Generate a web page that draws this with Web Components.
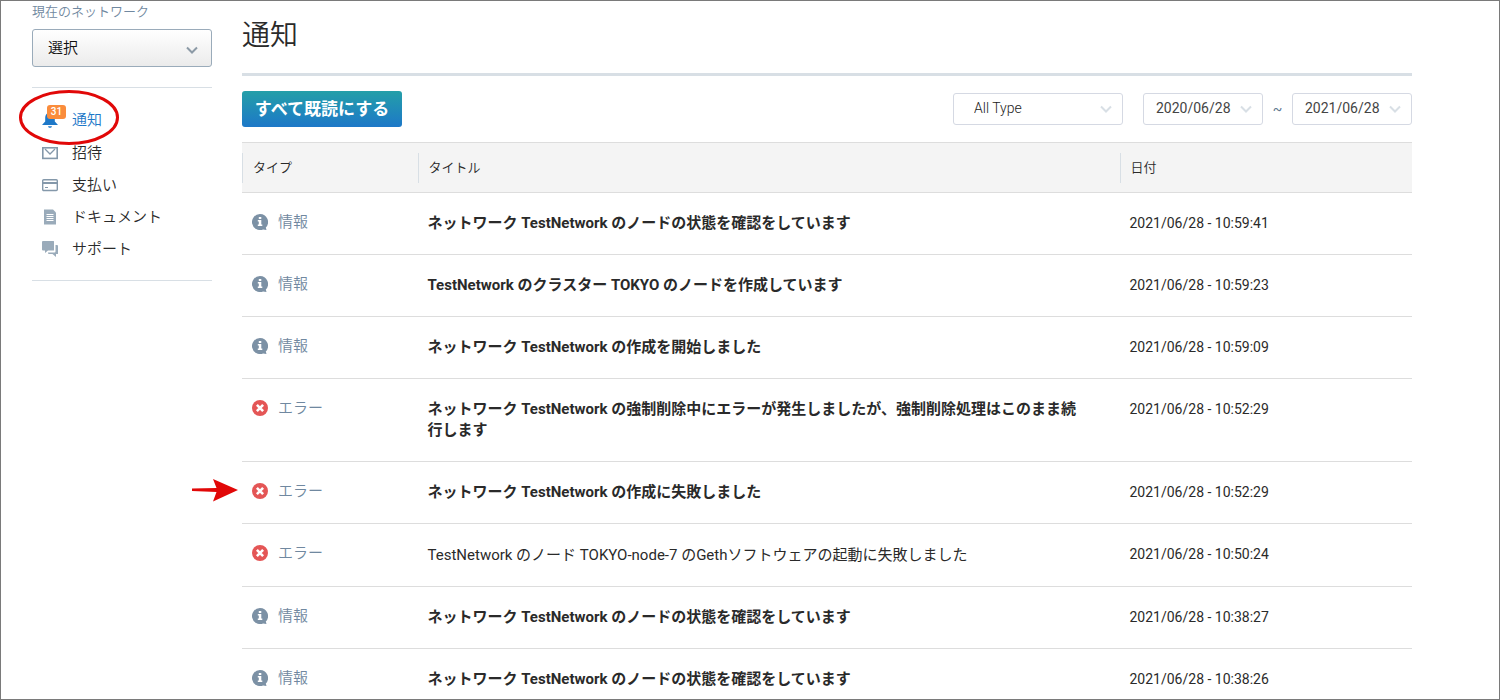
<!DOCTYPE html>
<html lang="ja">
<head>
<meta charset="utf-8">
<title>通知</title>
<style>
  * { box-sizing: border-box; }
  body {
    margin: 0;
    height: 100vh;
    overflow: hidden;
    border: 1px solid #7a7a7a;
    background: #fff;
    color: #2a2a2a;
    font: 350 15px/22px Roboto, "Noto Sans CJK JP", sans-serif;
  }
</style>
</head>
<body>
<app-shell>
  <side-bar slot="side">
    <nav-item icon="bell" badge="31" active marked>通知</nav-item>
    <nav-item icon="mail">招待</nav-item>
    <nav-item icon="card">支払い</nav-item>
    <nav-item icon="doc">ドキュメント</nav-item>
    <nav-item icon="chat">サポート</nav-item>
  </side-bar>
  <page-header>通知</page-header>
  <filter-bar></filter-bar>
  <notice-table></notice-table>
</app-shell>

<script>
const define = (name, css, html, init) => {
  const template = document.createElement('template');
  template.innerHTML = `<style>*{box-sizing:border-box}${css}</style>${html}`;
  customElements.define(name, class extends HTMLElement {
    connectedCallback() {
      if (this.shadowRoot) return;
      this.attachShadow({ mode: 'open' }).append(template.content.cloneNode(true));
      if (init) init(this, this.shadowRoot);
    }
  });
};

const icons = {
  bell: '<path fill="#1d78c8" d="M8 .5C4.700 .5 3.200 3 3.200 6v3.500L0 13h16l-3.200-3.500V6c0-3-1.500-5.500-4.800-5.500zM6 14.200h4c-.3 1.100-1 1.600-2 1.600s-1.700-.5-2-1.600z"/>',
  mail: '<rect x=".8" y="2.800" width="14.400" height="10.600" fill="none" stroke="#8498aa" stroke-width="1.600"/><path d="M3 4l5 5 5-5" fill="none" stroke="#8498aa" stroke-width="1.300"/>',
  card: '<rect x=".7" y="2.700" width="14.600" height="10.800" rx="1" fill="none" stroke="#8498aa" stroke-width="1.400"/><path d="M1 6h14" stroke="#8498aa" stroke-width="2"/><path d="M3 10.500h3" stroke="#8498aa"/>',
  doc: '<path fill="#9aabba" d="M2 .5h9l3 3v12H2z"/><path d="M4.500 5.500h7M4.500 7.500h7M4.500 9.500h7M4.500 11.500h7" stroke="#fff" stroke-width="1"/>',
  chat: '<path fill="#9aabba" d="M1 0h10.500q.5 0 .5.500v8.500q0 .5-.5.500H6l-3 2.500V9.500H1q-1 0-1-1V1q0-1 1-1z"/><path fill="#9aabba" d="M13.500 4H15q1 0 1 1v7.500q0 .5-.5.500H14v3l-3.500-3H7q-1 0-1-1v-.500h6.500q1 0 1-1z"/>',
  info: '<path fill="#7c91a5" d="M8 0a8 8 0 1 0 3 15.400L14.500 16l-.7-2.500A8 8 0 0 0 8 0z"/><path fill="#fff" d="M6.800 3h2.500v2H6.800zM5.800 6h3.500v4.500h1V12H5.800v-1.500h1V7.500h-1z"/>',
  error: '<circle cx="8" cy="8" r="8" fill="#e45656"/><path d="M4.900 4.900l6.200 6.200M11.100 4.900l-6.200 6.200" stroke="#fff" stroke-width="2.600"/>',
  chevron: '<path d="M3 5.500l5 5 5-5" fill="none" stroke="currentColor" stroke-width="2"/>'
};

define('ui-icon', ':host{display:block;width:16px;height:16px;flex:none}svg{display:block;width:100%;height:100%}', '<svg viewBox="0 0 16 16" aria-hidden="true"></svg>',
  (el, root) => { root.querySelector('svg').innerHTML = icons[el.getAttribute('name')]; });

define('app-shell', `
  :host{display:grid;grid-template-columns:180px minmax(0,1fr);column-gap:30px;max-width:1500px;margin:0 auto;padding:0 87px 0 31px}
`, '<aside><slot name="side"></slot></aside><main><slot></slot></main>');

define('side-bar', `
  :host{display:block}
  label{display:block;font-size:13px;line-height:20px;padding-top:1px;color:#7088a0}
  .pick{display:grid;align-items:center;margin:7px 0 20px}
  select{grid-area:1/1;appearance:none;width:100%;height:38px;padding:0 15px;border:1px solid #9aabba;border-radius:3px;
    background:linear-gradient(#fff,#ebebeb);color:#111;font:inherit}
  ui-icon{grid-area:1/1;justify-self:end;margin:3px 12px 0 0;color:#8c9aa6;pointer-events:none}
  nav{border:solid #d8dfe5;border-width:1px 0;padding:16px 0}
`, `<label for="network">現在のネットワーク</label>
  <div class="pick"><select id="network"><option>選択</option></select><ui-icon name="chevron"></ui-icon></div>
  <nav><slot></slot></nav>`);

define('nav-item', `
  :host{display:block;position:relative}
  a{display:flex;align-items:center;gap:14px;height:32px;padding:1px 0 0 10px;color:#2a2a2a;text-decoration:none}
  :host([active]) a{padding-top:0;color:#1d78c8}
  .badge{position:absolute;left:15px;top:1px;min-width:19px;height:14px;border-radius:3px;background:#fa8c3c;color:#fff;
    font-size:10px;font-weight:500;line-height:14px;text-align:center}
  .ring{position:absolute;left:-14px;top:-15px;width:102px;height:56px;pointer-events:none}
`, '<a href="#"><ui-icon></ui-icon><span><slot></slot></span></a>',
  (el, root) => {
    root.querySelector('ui-icon').replaceWith(Object.assign(document.createElement('template'), {
      innerHTML: `<ui-icon name="${el.getAttribute('icon')}"></ui-icon>` }).content);
    if (el.hasAttribute('badge')) root.querySelector('a').insertAdjacentHTML('beforeend', `<span class="badge">${el.getAttribute('badge')}</span>`);
    if (el.hasAttribute('marked')) root.querySelector('a').insertAdjacentHTML('afterend',
      '<svg class="ring" viewBox="0 0 102 56"><ellipse cx="51" cy="28.500" rx="48.500" ry="26" fill="none" stroke="#e10808" stroke-width="3"/></svg>');
  });

define('page-header', `
  :host{display:block;border-bottom:3px solid #d8dfe5}
  h1{margin:0;padding:15px 0 17px;font-size:28px;line-height:40px;font-weight:350}
`, '<h1><slot></slot></h1>');

define('filter-bar', `
  :host{display:flex;align-items:center;justify-content:space-between;padding:15px 0}
  button{width:160px;height:36px;padding:0;border:0;border-radius:3px;background:linear-gradient(#249fa8,#1d78c8);
    color:#fff;font:700 17px/34px Roboto,"Noto Sans CJK JP",sans-serif}
  .filters{display:flex;align-items:center;color:#5f7890}
  .tilde{width:29px;text-align:center;font-size:14px;font-weight:400}
  .box{display:grid;align-items:center;width:120px}
  .type{width:170px;margin-right:20px}
  select,input{grid-area:1/1;appearance:none;width:100%;min-width:0;height:32px;padding:0 12px 2px;border:1px solid #d5d9e3;border-radius:3px;
    background:#fff;color:#444;font:400 14px/20px Roboto,sans-serif}
  select{padding-left:20px;font-weight:300;color:#222}
  ui-icon{grid-area:1/1;justify-self:end;margin-right:9px;color:#d8dfe5;pointer-events:none}
`, `<button type="button">すべて既読にする</button>
  <div class="filters">
    <div class="box type"><select aria-label="タイプ"><option>All Type</option></select><ui-icon name="chevron"></ui-icon></div>
    <div class="box"><input aria-label="開始日" value="2020/06/28" readonly><ui-icon name="chevron"></ui-icon></div>
    <span class="tilde">~</span>
    <div class="box"><input aria-label="終了日" value="2021/06/28" readonly><ui-icon name="chevron"></ui-icon></div>
  </div>`);

define('notice-type', `
  :host{display:flex;align-items:flex-end;gap:10px;color:#7088a0}
  ::slotted(ui-icon){margin-bottom:3px}
`, '<slot name="icon"></slot><span><slot></slot></span>');

const notices = [
  ['info', 'ネットワーク TestNetwork のノードの状態を確認をしています', '2021/06/28 - 10:59:41'],
  ['info', 'TestNetwork のクラスター TOKYO のノードを作成しています', '2021/06/28 - 10:59:23'],
  ['info', 'ネットワーク TestNetwork の作成を開始しました', '2021/06/28 - 10:59:09'],
  ['error', 'ネットワーク TestNetwork の強制削除中にエラーが発生しましたが、強制削除処理はこのまま続行します', '2021/06/28 - 10:52:29'],
  ['error', 'ネットワーク TestNetwork の作成に失敗しました', '2021/06/28 - 10:52:29', 'marked'],
  ['error', 'TestNetwork のノード TOKYO-node-7 のGethソフトウェアの起動に失敗しました', '2021/06/28 - 10:50:24', 'read'],
  ['info', 'ネットワーク TestNetwork のノードの状態を確認をしています', '2021/06/28 - 10:38:27'],
  ['info', 'ネットワーク TestNetwork のノードの状態を確認をしています', '2021/06/28 - 10:38:26']
];
const arrow = '<svg class="arrow" viewBox="0 0 46 24" aria-hidden="true"><path fill="#e10808" d="M0 10.500L24.500 10 21 1 46 12 21 23.500l3.500-9.500L0 13z"/></svg>';

define('notice-table', `
  :host{display:block}
  table{width:100%;table-layout:fixed;border-collapse:separate;border-spacing:0;border-top:1px solid #ddd}
  th,td{text-align:left;vertical-align:top;border-bottom:1px solid #ddd}
  th{padding:10px 0 9px;background:#f4f4f4;font-size:13px;font-weight:350}
  th span{display:block;border-left:1px solid #d8dfe5;padding-left:10px;line-height:30px}
  td{padding:20px 40px 20px 10px;line-height:21px}
  .type{width:15%;padding-right:0;position:relative}
  .title{width:60%}
  .date{width:25%}
  td.type{padding-top:19px}
  td.title{font-weight:700}
  td.date{font-size:14px;font-weight:400;padding-right:0}
  .read td.title{font-weight:400;line-height:22px}
  .arrow{position:absolute;left:-50px;top:16px;width:46px;height:24px}
`, `<table><thead><tr>
    <th class="type" scope="col"><span>タイプ</span></th>
    <th class="title" scope="col"><span>タイトル</span></th>
    <th class="date" scope="col"><span>日付</span></th>
  </tr></thead><tbody></tbody></table>`,
  (el, root) => {
    root.querySelector('tbody').innerHTML = notices.map(([kind, title, date, state = '']) => `
      <tr class="${state}">
        <td class="type"><notice-type><ui-icon slot="icon" name="${kind}"></ui-icon>${kind === 'info' ? '情報' : 'エラー'}</notice-type>${state === 'marked' ? arrow : ''}</td>
        <td class="title">${title}</td>
        <td class="date">${date}</td>
      </tr>`).join('');
  });
</script>
</body>
</html>
